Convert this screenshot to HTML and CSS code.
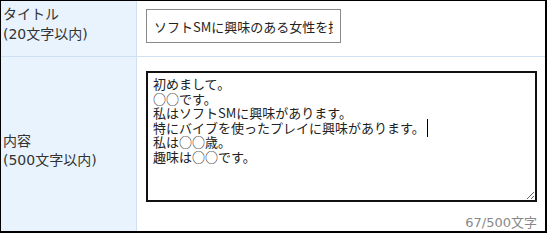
FILE: index.html
```html
<!DOCTYPE html>
<html lang="ja">
<head>
    <meta charset="UTF-8">
    <meta name="viewport" content="width=device-width, initial-scale=1.0">
    <title>投稿フォーム</title>
    <link rel="stylesheet" href="styles.css">
</head>
<body>
    <div class="form">
        <div class="label label-top">タイトル<br>(20文字以内)</div>
        <div class="field field-title">
            <input type="text" class="title-input" value="ソフトSMに興味のある女性を探しています">
        </div>

        <div class="label label-mid">
            <div>内容<br>(500文字以内)</div>
        </div>
        <div class="field field-body">
            <div class="textarea-wrap">
                <textarea class="body-input">初めまして。
○○です。
私はソフトSMに興味があります。
特にバイブを使ったプレイに興味があります。
私は○○歳。
趣味は○○です。</textarea>
                <span class="caret"></span>
            </div>
            <div class="counter">67/500文字</div>
        </div>
    </div>
</body>
</html>
```

FILE: styles.css
```css
/* ベース */
body {
    margin: 0;
    background-color: #fff;
    font-family: "Noto Sans CJK JP", "DejaVu Sans", sans-serif;
    color: #333;
}

/* フォーム全体 */
.form {
    display: grid;
    grid-template-columns: 136px 1fr;
    grid-template-rows: 56px 174px;
    width: 544px;
    border-style: solid;
    border-color: #000;
    border-width: 1px 2px 2px 1px;
}

/* 左の見出し列 */
.label {
    background-color: #e9f3fe;
    border-right: 1px solid #cfe0f2;
    font-family: "DejaVu Sans", "Noto Sans CJK JP", sans-serif;
    font-size: 14px;
    line-height: 20px;
    padding-left: 2px;
}
.label-top {
    padding-top: 3px;
    border-bottom: 1px solid #cfe0f2;
}
.label-mid {
    display: flex;
    flex-direction: column;
    justify-content: center;
    padding-top: 14px;
    line-height: 19px;
}

/* 右の入力列 */
.field {
    padding-left: 9px;
}
.field-title {
    padding-top: 8px;
    border-bottom: 1px solid #cfe0f2;
}
.title-input {
    box-sizing: border-box;
    width: 195px;
    height: 34px;
    border: 1px solid #8a8a8a;
    border-radius: 0;
    padding: 0 7px;
    font-family: inherit;
    font-size: 13px;
    color: #222;
    outline: none;
}
.field-body {
    padding-top: 14px;
}
.textarea-wrap {
    position: relative;
    width: 391px;
    height: 131px;
}
.body-input {
    box-sizing: border-box;
    width: 100%;
    height: 100%;
    border: 2px solid #111;
    border-radius: 0;
    padding: 4px 5px;
    font-family: inherit;
    font-size: 13px;
    line-height: 14.6px;
    color: #222;
    outline: none;
    display: block;
}
.caret {
    position: absolute;
    left: 281px;
    top: 48px;
    width: 1px;
    height: 18px;
    background-color: #000;
}
.counter {
    width: 391px;
    text-align: right;
    font-family: "DejaVu Sans", "Noto Sans CJK JP", sans-serif;
    font-size: 13px;
    line-height: 18px;
    margin-top: 12px;
    color: #888;
}
```
